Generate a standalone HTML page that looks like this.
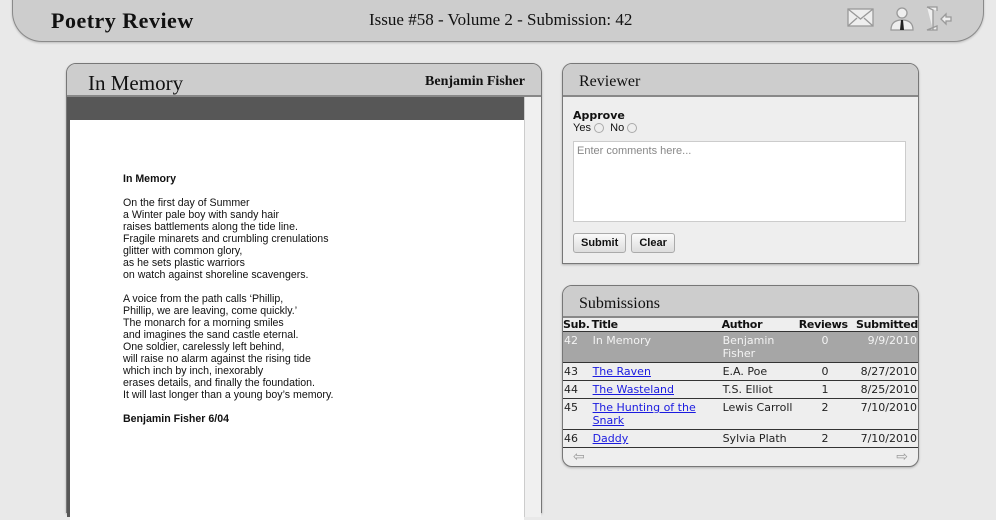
<!DOCTYPE html>
<html><head><meta charset="utf-8"><style>
*{box-sizing:border-box;margin:0;padding:0}
body{width:996px;height:500px;overflow:hidden;background:#e9e9e9;font-family:"Liberation Sans",sans-serif;position:relative}
.hdr{position:absolute;left:12px;top:-2px;width:972px;height:44px;background:#cdcdcd;border:1px solid #8a8a8a;border-top:none;border-radius:0 0 30px 30px;box-shadow:0 1px 2px rgba(0,0,0,.2)}
.logo{position:absolute;left:38px;top:10px;font-family:"Liberation Serif",serif;font-weight:bold;font-size:22px;color:#111;letter-spacing:0.5px}
.issue{position:absolute;left:356px;top:12px;font-family:"Liberation Serif",serif;font-size:17px;color:#111}
.panel{position:absolute;background:#eee;border:1px solid #777;border-radius:10px 10px 0 0;box-shadow:0 1px 2px rgba(0,0,0,.25)}
.ph{height:33px;background:#cdcdcd;border-bottom:2px solid #888;border-radius:9px 9px 0 0;position:relative;font-family:"Liberation Serif",serif;color:#111}
.doc{position:absolute;left:3px;top:56px;width:454px;height:400px;background:#fff;font-size:10.6px;line-height:12px;color:#111;padding:53px 0 0 53px}
table{border-collapse:collapse;width:100%;font-family:"DejaVu Sans",sans-serif;font-size:11px}
td,th{padding:2px 1px;vertical-align:top;border-bottom:1px solid #333;color:#222}
th{font-weight:bold;text-align:left;padding:0 0;color:#111;letter-spacing:-0.3px}
a{color:#1a1ae0;text-decoration:underline}
.sel td{background:#a6a6a6;color:#f3f3f3}
.btn{display:inline-block;border:1px solid #aaa;border-radius:3px;background:linear-gradient(#fafafa,#ddd);font-size:11px;font-weight:bold;padding:3px 7px;margin-right:2px}
.r{display:inline-block;width:10px;height:10px;border:1px solid #aaa;border-radius:50%;background:#eee;vertical-align:-2px}
</style></head><body>
<div class="hdr">
<div class="logo">Poetry Review</div>
<div class="issue">Issue #58 - Volume 2 - Submission: 42</div>
<svg style="position:absolute;left:834px;top:8px" width="110" height="26" viewBox="0 0 110 26">
<g fill="none" stroke="#999" stroke-width="1.3">
<rect x="1" y="3" width="25" height="17" fill="#eee"/><path d="M1 3l12.5 10L26 3M1 20l9-8M26 20l-9-8"/>
<circle cx="55" cy="7" r="5" fill="#eee"/><path d="M44 24c0-7 4-10 11-10s11 3 11 10z" fill="#eee"/></g>
<path d="M54 14h2l1 10h-4z" fill="#222"/>
<g fill="none" stroke="#999" stroke-width="1.3"><path d="M80 1h10v4M90 20v4H80zM80 1l6 3v20" fill="#eee"/><path d="M104 11h-5v-3l-5 5 5 5v-3h5z" fill="#eee"/></g>
</svg>
</div>

<div class="panel" style="left:66px;top:63px;width:476px;height:450px">
<div class="ph"><span style="position:absolute;left:21px;top:7px;font-size:21px">In Memory</span><span style="position:absolute;right:16px;top:10px;font-size:14px;font-weight:bold">Benjamin Fisher</span></div>
<div style="position:absolute;left:0;top:33px;width:457px;height:420px;background:#575757"></div>
<div style="position:absolute;left:457px;top:33px;width:17px;height:420px;background:#f0f0f0;border-left:1px solid #ccc"></div>
<div class="doc">
<b>In Memory</b><br><br>
On the first day of Summer<br>a Winter pale boy with sandy hair<br>raises battlements along the tide line.<br>Fragile minarets and crumbling crenulations<br>glitter with common glory,<br>as he sets plastic warriors<br>on watch against shoreline scavengers.<br><br>
A voice from the path calls ‘Phillip,<br>Phillip, we are leaving, come quickly.’<br>The monarch for a morning smiles<br>and imagines the sand castle eternal.<br>One soldier, carelessly left behind,<br>will raise no alarm against the rising tide<br>which inch by inch, inexorably<br>erases details, and finally the foundation.<br>It will last longer than a young boy’s memory.<br><br>
<b>Benjamin Fisher 6/04</b>
</div>
</div>

<div class="panel" style="left:562px;top:63px;width:357px;height:201px">
<div class="ph"><span style="position:absolute;left:16px;top:9px;font-size:16px">Reviewer</span></div>
<div style="padding:12px 10px 0 10px;font-size:11px;color:#111">
<div style="font-family:'DejaVu Sans',sans-serif;font-weight:bold;font-size:11px">Approve</div>
<div>Yes <span class="r"></span> &nbsp;No <span class="r"></span></div>
<div style="margin-top:7px;height:81px;width:333px;background:#fff;border:1px solid #ccc;color:#888;padding:3px">Enter comments here...</div>
<div style="margin-top:11px"><span class="btn">Submit</span> <span class="btn">Clear</span></div>
</div></div>

<div class="panel" style="left:562px;top:285px;width:357px;height:182px;border-radius:10px">
<div class="ph" style="height:32px"><span style="position:absolute;left:16px;top:9px;font-size:16px">Submissions</span></div>
<table>
<tr><th>Sub.</th><th>Title</th><th>Author</th><th>Reviews</th><th style="text-align:right">Submitted</th></tr>
<tr class="sel"><td>42</td><td>In Memory</td><td>Benjamin<br>Fisher</td><td style="text-align:center">0</td><td style="text-align:right">9/9/2010</td></tr>
<tr><td>43</td><td><a>The Raven</a></td><td>E.A. Poe</td><td style="text-align:center">0</td><td style="text-align:right">8/27/2010</td></tr>
<tr><td>44</td><td><a>The Wasteland</a></td><td>T.S. Elliot</td><td style="text-align:center">1</td><td style="text-align:right">8/25/2010</td></tr>
<tr><td>45</td><td style="width:130px"><a>The Hunting of the Snark</a></td><td>Lewis Carroll</td><td style="text-align:center">2</td><td style="text-align:right">7/10/2010</td></tr>
<tr><td>46</td><td><a>Daddy</a></td><td>Sylvia Plath</td><td style="text-align:center">2</td><td style="text-align:right">7/10/2010</td></tr>
</table>
<div style="position:relative;height:18px;color:#999;font-size:14px"><span style="position:absolute;left:10px;top:0">⇦</span><span style="position:absolute;right:10px;top:0">⇨</span></div>
</div>
</body></html>
